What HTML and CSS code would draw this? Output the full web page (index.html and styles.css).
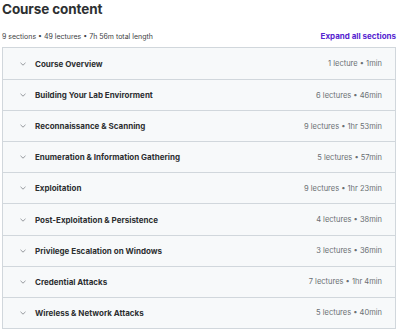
FILE: index.html
```html
<!DOCTYPE html>
<html lang="en">
<head>
  <meta charset="UTF-8">
  <meta name="viewport" content="width=device-width, initial-scale=1.0">
  <title>Course content</title>
  <link rel="stylesheet" href="styles.css">
</head>
<body>
  <div class="curriculum">
    <h2 class="title">Course content</h2>

    <div class="summary">
      <span class="stats">9 sections &bull; 49 lectures &bull; 7h 56m total length</span>
      <button class="expand-all" type="button">Expand all sections</button>
    </div>

    <div class="sections">
      <div class="section">
        <span class="chevron"><svg width="6" height="4" viewBox="0 0 6 4"><path d="M0.5 0.8 L3 3.2 L5.5 0.8" fill="none" stroke="currentColor" stroke-width="0.9"/></svg></span>
        <span class="section-title">Course Overview</span>
        <span class="section-meta">1 lecture &bull; 1min</span>
      </div>
      <div class="section">
        <span class="chevron"><svg width="6" height="4" viewBox="0 0 6 4"><path d="M0.5 0.8 L3 3.2 L5.5 0.8" fill="none" stroke="currentColor" stroke-width="0.9"/></svg></span>
        <span class="section-title">Building Your Lab Envirorment</span>
        <span class="section-meta">6 lectures &bull; 46min</span>
      </div>
      <div class="section">
        <span class="chevron"><svg width="6" height="4" viewBox="0 0 6 4"><path d="M0.5 0.8 L3 3.2 L5.5 0.8" fill="none" stroke="currentColor" stroke-width="0.9"/></svg></span>
        <span class="section-title">Reconnaissance &amp; Scanning</span>
        <span class="section-meta">9 lectures &bull; 1hr 53min</span>
      </div>
      <div class="section">
        <span class="chevron"><svg width="6" height="4" viewBox="0 0 6 4"><path d="M0.5 0.8 L3 3.2 L5.5 0.8" fill="none" stroke="currentColor" stroke-width="0.9"/></svg></span>
        <span class="section-title">Enumeration &amp; Information Gathering</span>
        <span class="section-meta">5 lectures &bull; 57min</span>
      </div>
      <div class="section">
        <span class="chevron"><svg width="6" height="4" viewBox="0 0 6 4"><path d="M0.5 0.8 L3 3.2 L5.5 0.8" fill="none" stroke="currentColor" stroke-width="0.9"/></svg></span>
        <span class="section-title">Exploitation</span>
        <span class="section-meta">9 lectures &bull; 1hr 23min</span>
      </div>
      <div class="section">
        <span class="chevron"><svg width="6" height="4" viewBox="0 0 6 4"><path d="M0.5 0.8 L3 3.2 L5.5 0.8" fill="none" stroke="currentColor" stroke-width="0.9"/></svg></span>
        <span class="section-title">Post-Exploitation &amp; Persistence</span>
        <span class="section-meta">4 lectures &bull; 38min</span>
      </div>
      <div class="section">
        <span class="chevron"><svg width="6" height="4" viewBox="0 0 6 4"><path d="M0.5 0.8 L3 3.2 L5.5 0.8" fill="none" stroke="currentColor" stroke-width="0.9"/></svg></span>
        <span class="section-title">Privilege Escalation on Windows</span>
        <span class="section-meta">3 lectures &bull; 36min</span>
      </div>
      <div class="section">
        <span class="chevron"><svg width="6" height="4" viewBox="0 0 6 4"><path d="M0.5 0.8 L3 3.2 L5.5 0.8" fill="none" stroke="currentColor" stroke-width="0.9"/></svg></span>
        <span class="section-title">Credential Attacks</span>
        <span class="section-meta">7 lectures &bull; 1hr 4min</span>
      </div>
      <div class="section">
        <span class="chevron"><svg width="6" height="4" viewBox="0 0 6 4"><path d="M0.5 0.8 L3 3.2 L5.5 0.8" fill="none" stroke="currentColor" stroke-width="0.9"/></svg></span>
        <span class="section-title">Wireless &amp; Network Attacks</span>
        <span class="section-meta">5 lectures &bull; 40min</span>
      </div>
    </div>
  </div>
</body>
</html>
```

FILE: styles.css
```css
* {
  margin: 0;
  padding: 0;
  box-sizing: border-box;
}

body {
  font-family: Inter, "Noto Sans", sans-serif;
  background: #ffffff;
  color: #2d2f31;
  padding: 0 4px 0 2px;
}

.title {
  font-size: 13.5px;
  font-weight: 700;
  line-height: 16px;
  padding-top: 1px;
  color: #2d2f31;
  letter-spacing: -0.1px;
}

.summary {
  display: flex;
  align-items: center;
  justify-content: space-between;
  margin-top: 11px;
  height: 16px;
  margin-bottom: 3px;
}

.stats {
  font-size: 7px;
  color: #3e4143;
}

.expand-all {
  border: none;
  background: none;
  font-family: inherit;
  font-size: 8px;
  font-weight: 700;
  color: #5624d0;
  cursor: pointer;
}

.sections {
  border: 1px solid #d1d7dc;
}

.section {
  display: flex;
  align-items: center;
  height: 31.1px;
  padding: 0 13px 0 17px;
  background: #f7f9fa;
  border-top: 1px solid #d1d7dc;
}

.section:first-child {
  border-top: none;
}

.chevron {
  display: flex;
  width: 15px;
  color: #8a8f93;
}

.section-title {
  flex: 1;
  font-size: 8px;
  font-weight: 700;
  color: #2d2f31;
}

.section-meta {
  font-size: 7.5px;
  color: #6a6f73;
}
```
